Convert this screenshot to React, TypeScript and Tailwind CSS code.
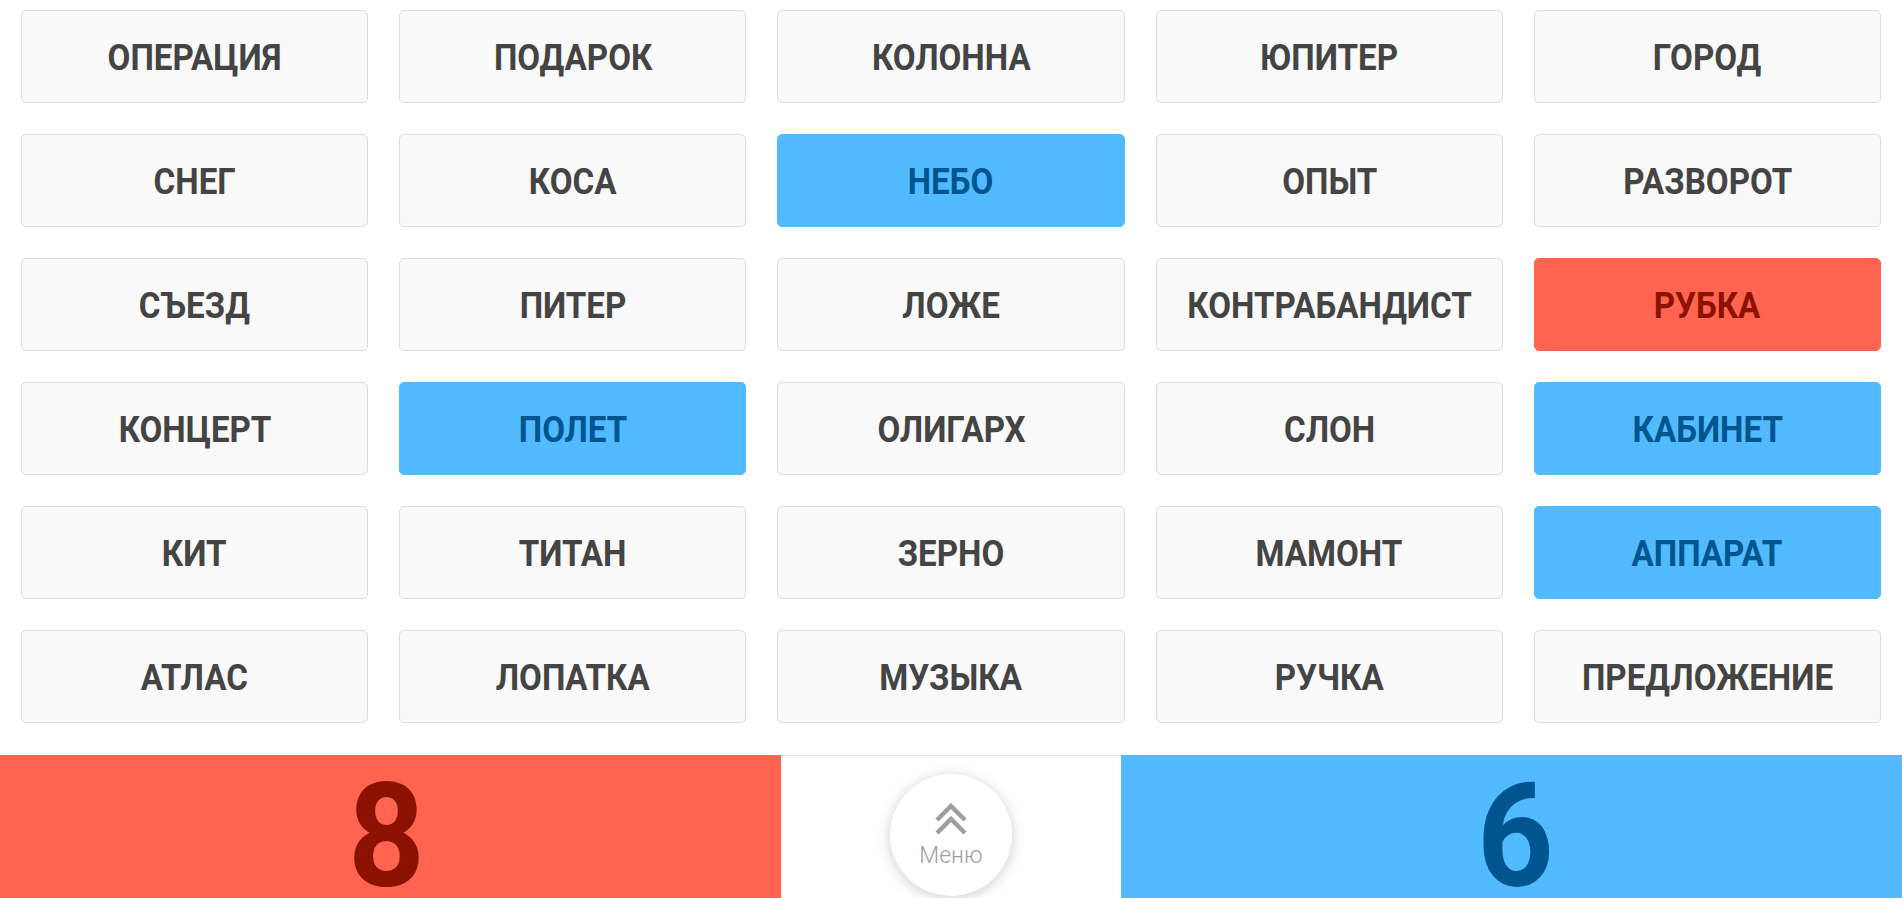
import React from "react";

type Kind = "n" | "b" | "r";
const words: [string, Kind][] = [
  ["ОПЕРАЦИЯ", "n"], ["ПОДАРОК", "n"], ["КОЛОННА", "n"], ["ЮПИТЕР", "n"], ["ГОРОД", "n"],
  ["СНЕГ", "n"], ["КОСА", "n"], ["НЕБО", "b"], ["ОПЫТ", "n"], ["РАЗВОРОТ", "n"],
  ["СЪЕЗД", "n"], ["ПИТЕР", "n"], ["ЛОЖЕ", "n"], ["КОНТРАБАНДИСТ", "n"], ["РУБКА", "r"],
  ["КОНЦЕРТ", "n"], ["ПОЛЕТ", "b"], ["ОЛИГАРХ", "n"], ["СЛОН", "n"], ["КАБИНЕТ", "b"],
  ["КИТ", "n"], ["ТИТАН", "n"], ["ЗЕРНО", "n"], ["МАМОНТ", "n"], ["АППАРАТ", "b"],
  ["АТЛАС", "n"], ["ЛОПАТКА", "n"], ["МУЗЫКА", "n"], ["РУЧКА", "n"], ["ПРЕДЛОЖЕНИЕ", "n"],
];

function Card({ w, k }: { w: string; k: Kind }) {
  const cls =
    k === "b"
      ? "bg-[#52bbff] border-[#52bbff] text-[#00558f]"
      : k === "r"
      ? "bg-[#ff6450] border-[#ff6450] text-[#8b1200]"
      : "bg-[#f9f9f9] border-[#dddddd] text-[#444444]";
  return (
    <div className={`h-[93px] rounded-[5px] border flex items-center justify-center pt-[2px] ${cls}`}>
      <span className="inline-block text-[36px] font-bold leading-none scale-x-[0.92] font-['Roboto',sans-serif]">
        {w}
      </span>
    </div>
  );
}

export default function App() {
  return (
    <div className="w-[1902px] h-[898px] bg-white overflow-hidden flex flex-col font-['Roboto',sans-serif]">
      <div className="grid grid-cols-5 gap-x-[31px] gap-y-[31px] px-[21px] pt-[10px]">
        {words.map(([w, k]) => (
          <Card key={w} w={w} k={k} />
        ))}
      </div>
      <div className="mt-[32px] flex h-[143px] overflow-hidden">
        <div className="w-[781px] bg-[#ff6450] flex justify-center pt-[10px]">
          <span className="inline-block text-[144px] font-bold leading-[144px] scale-x-[0.93] text-[#8b1200] -translate-x-[4px]">8</span>
        </div>
        <div className="flex-1 border-t border-[#dddddd] flex justify-center pt-[18px]">
          <div className="w-[122px] h-[122px] rounded-full bg-white shadow-[0_2px_14px_rgba(0,0,0,0.2)] flex flex-col items-center justify-center">
            <svg width="34" height="33" viewBox="0 0 34 33" className="mb-[7px] mt-[2px]">
              <polyline points="3,17 17,3 31,17" fill="none" stroke="#9e9e9e" strokeWidth="4.5" />
              <polyline points="3,30 17,16 31,30" fill="none" stroke="#9e9e9e" strokeWidth="4.5" />
            </svg>
            <span className="text-[23px] font-light leading-[26px] text-[#9e9e9e]">Меню</span>
          </div>
        </div>
        <div className="w-[781px] bg-[#52bbff] flex justify-center pt-[10px]">
          <span className="inline-block text-[144px] font-bold leading-[144px] scale-x-[0.93] text-[#00558f] translate-x-[4px]">6</span>
        </div>
      </div>
    </div>
  );
}
